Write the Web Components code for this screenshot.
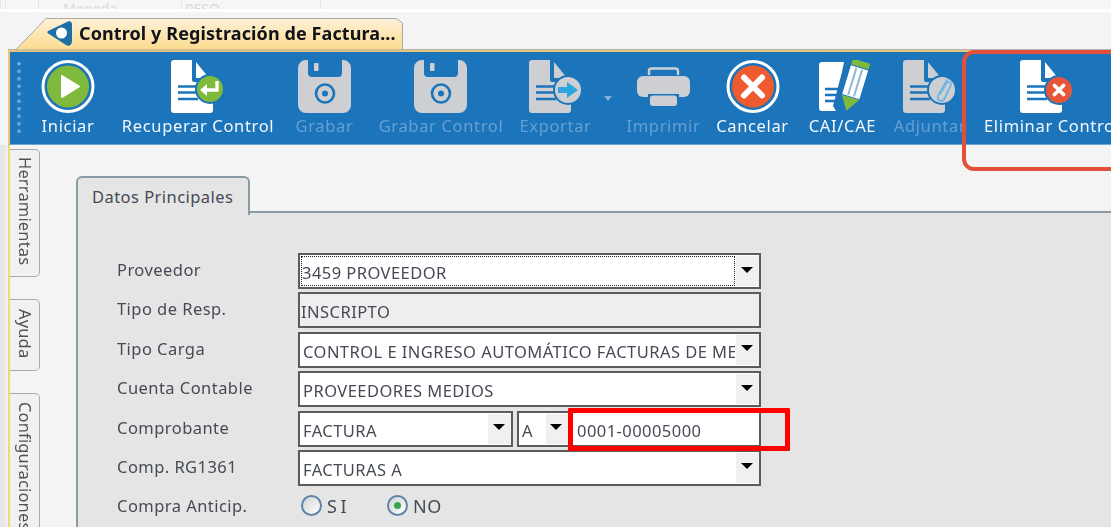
<!DOCTYPE html>
<html lang="es">
<head>
<meta charset="utf-8">
<title>Control y Registración de Facturas</title>
<style>
  html, body { margin: 0; height: 100%; overflow: hidden; background: #f4f4f4; }
  body { font-family: "Noto Sans", "Liberation Sans", sans-serif; }
</style>
</head>
<body>
<app-shell>
  <top-strip></top-strip>
  <doc-tab>Control y Registración de Factura...</doc-tab>
  <tool-bar>
    <tool-button icon="play" w="54" gap="0">Iniciar</tool-button>
    <tool-button icon="recover" w="152" gap="27">Recuperar Control</tool-button>
    <tool-button icon="save" w="57" gap="22" off>Grabar</tool-button>
    <tool-button icon="save" w="124" gap="26" off>Grabar Control</tool-button>
    <tool-button icon="export" w="73" gap="16" off menu>Exportar</tool-button>
    <tool-button icon="print" w="67" gap="38" off>Imprimir</tool-button>
    <tool-button icon="cancel" w="71" gap="20">Cancelar</tool-button>
    <tool-button icon="cai" w="69" gap="20">CAI/CAE</tool-button>
    <tool-button icon="attach" w="70" gap="18" off>Adjuntar</tool-button>
    <tool-button icon="delete" w="126" gap="19" start>Eliminar Control</tool-button>
  </tool-bar>
  <work-area>
    <side-tabs slot="side">
      <side-tab h="128" pad="7">Herramientas</side-tab>
      <side-tab h="72" pad="9">Ayuda</side-tab>
      <side-tab h="160" pad="8">Configuraciones</side-tab>
    </side-tabs>
    <form-panel title="Datos Principales">
      <form-row label="Proveedor"><combo-box focused>3459 PROVEEDOR</combo-box></form-row>
      <form-row label="Tipo de Resp."><combo-box readonly>INSCRIPTO</combo-box></form-row>
      <form-row label="Tipo Carga"><combo-box>CONTROL E INGRESO AUTOMÁTICO FACTURAS DE MEDIOS</combo-box></form-row>
      <form-row label="Cuenta Contable"><combo-box>PROVEEDORES MEDIOS</combo-box></form-row>
      <form-row label="Comprobante">
        <combo-box w="215">FACTURA</combo-box>
        <combo-box w="53" small>A</combo-box>
        <combo-box w="191" plain>0001-00005000</combo-box>
      </form-row>
      <form-row label="Comp. RG1361"><combo-box>FACTURAS A</combo-box></form-row>
      <form-row label="Compra Anticip.">
        <radio-opt>S I</radio-opt>
        <radio-opt checked>NO</radio-opt>
      </form-row>
    </form-panel>
  </work-area>
  <mark-box color="#e2503a" radius="12" thick="4" x="962" y="50" w="170" h="121"></mark-box>
  <mark-box color="#ff0000" radius="1" thick="5" x="568" y="408" w="222" h="43"></mark-box>
</app-shell>

<script>
const GRAY = "#cdcfd2";
const BLUE = "#1c75bb";

function docShape(fill, lines) {
  return `<path fill="${fill}" d="M3 0H21V20a2 2 0 0 0 2 2H42V50a3 3 0 0 1-3 3H3a3 3 0 0 1-3-3V3a3 3 0 0 1 3-3Z"/>
    <path fill="${fill}" d="M25 2L38 18H25Z"/>
    <path stroke="${lines}" stroke-width="2.4" d="M7 26.5H27M7 32.5H25M7 39H27"/>`;
}

const ICONS = {
  play: `<circle cx="27" cy="26.5" r="25" fill="none" stroke="#fff" stroke-width="3"/>
    <circle cx="27" cy="26.5" r="21" fill="#7fba3c"/>
    <path fill="#fff" stroke="#fff" stroke-width="2" stroke-linejoin="round" d="M21 16L38 26.5L21 37Z"/>`,
  recover: docShape("#fff", BLUE) + `<circle cx="39" cy="29" r="15" fill="${BLUE}"/>
    <circle cx="39" cy="29" r="13" fill="#7fba3c"/>
    <path fill="none" stroke="#fff" stroke-width="3.4" d="M46 21V30H33"/>
    <path fill="#fff" d="M36 24V36L29 30Z"/>`,
  save: `<path fill="${GRAY}" d="M8 0H10V13a4 4 0 0 0 4 4H40a4 4 0 0 0 4-4V0H45a8 8 0 0 1 8 8V45a8 8 0 0 1-8 8H8a8 8 0 0 1-8-8V8a8 8 0 0 1 8-8Z"/>
    <rect x="16" y="3" width="4.5" height="8" rx="1" fill="${GRAY}"/>
    <circle cx="27" cy="33.5" r="9" fill="none" stroke="${BLUE}" stroke-width="2.6"/>
    <circle cx="27" cy="33.5" r="3" fill="${BLUE}"/>`,
  export: docShape(GRAY, BLUE) + `<circle cx="39" cy="30" r="15" fill="${BLUE}"/>
    <circle cx="39" cy="30" r="13" fill="${GRAY}"/>
    <path fill="#2ba6e0" d="M29 27H38V22L49 30L38 38V33H29Z"/>`,
  print: `<path fill="none" stroke="${GRAY}" stroke-width="2.4" d="M12 15V11a2.500 2.500 0 0 1 2.500-2.500H38.500A2.500 2.500 0 0 1 41 11V15"/>
    <rect x="0" y="16" width="53" height="21" rx="6" fill="${GRAY}"/>
    <rect x="11" y="34" width="31" height="3" fill="${BLUE}"/>
    <rect x="13" y="35.500" width="27" height="10.500" rx="3" fill="${GRAY}"/>`,
  cancel: `<circle cx="27" cy="26.5" r="25" fill="none" stroke="#fff" stroke-width="3"/>
    <circle cx="27" cy="26.5" r="21" fill="#ee5b2f"/>
    <path stroke="#fff" stroke-width="6" stroke-linecap="round" d="M18 17.500L36 35.500M36 17.500L18 35.500"/>`,
  cai: `<g transform="translate(2 0)">
      <path fill="#fff" d="M4 2H26L24 12L15 46L18 51H4a3 3 0 0 1-3-3V5a3 3 0 0 1 3-3Z"/>
      <path stroke="${BLUE}" stroke-width="2.400" d="M7 29H22M7 35H20M7 41H19"/>
      <g transform="rotate(17 36 26)">
        <path fill="#7fba3c" d="M27 0H45V6H27Z"/>
        <path fill="#fff" d="M27 7H45V37H27Z"/>
        <path stroke="#8fb8da" stroke-width="2" d="M33 8V36M39 8V36"/>
        <path fill="#7fba3c" d="M27 38H45L36 52Z"/>
      </g>
    </g>`,
  attach: docShape(GRAY, BLUE) + `<circle cx="39" cy="30" r="15" fill="${BLUE}"/>
    <circle cx="39" cy="30" r="13" fill="${GRAY}"/>
    <path fill="none" stroke="#6fb7e2" stroke-width="1.800" stroke-linecap="round" d="M44 20L35 36a3.500 3.500 0 0 0 6 3.500L48 25a2.500 2.500 0 0 0-4-2.500L37 34"/>`,
  delete: docShape("#fff", BLUE) + `<circle cx="39" cy="30" r="15" fill="${BLUE}"/>
    <circle cx="39" cy="30" r="13" fill="#e8563a"/>
    <path stroke="#fff" stroke-width="3.600" stroke-linecap="round" d="M34.500 25.500L43.500 34.500M43.500 25.500L34.500 34.500"/>`
};

class AppShell extends HTMLElement {
  constructor() {
    super();
    this.attachShadow({ mode: "open" });
    this.shadowRoot.innerHTML = `
      <style>
        /* the reference is an upscaled capture, a touch soft everywhere */
        :host { display: flex; flex-direction: column; position: relative; height: 527px; overflow: hidden; filter: blur(0.4px); }
      </style>
      <slot></slot>`;
  }
}

class TopStrip extends HTMLElement {
  constructor() {
    super();
    this.attachShadow({ mode: "open" });
    this.shadowRoot.innerHTML = `
      <style>
        :host { display: block; height: 9px; background: #f6f6f6; border-bottom: 3px solid #fff; overflow: hidden; color: #dadada; font-size: 14px; }
        .row { display: grid; grid-template-columns: 5px 33px 143px 139px 1fr; height: 9px; line-height: 14px; }
        .row > div { border-left: 1px solid #e6e6e6; white-space: nowrap; overflow: hidden; padding-top: 2px; }
        .m { padding-left: 24px; }
        .p { padding-left: 3px; }
      </style>
      <div class="row"><div></div><div></div><div class="m">Moneda</div><div class="p">PESO</div><div></div></div>`;
  }
}

class DocTab extends HTMLElement {
  constructor() {
    super();
    this.attachShadow({ mode: "open" });
    this.shadowRoot.innerHTML = `
      <style>
        :host { display: block; height: 39px; padding-left: 15px; margin-bottom: -1px; position: relative; z-index: 1; }
        .tab { position: relative; width: 389px; height: 39px; display: flex; align-items: center; padding-left: 32px; box-sizing: border-box; }
        svg.bg { position: absolute; left: 0; top: 0; }
        svg.logo { position: relative; flex: none; margin-right: 6px; margin-top: 3px; }
        .t { position: relative; font-weight: 700; font-size: 18px; letter-spacing: 0.100px; color: #10131a; white-space: nowrap; margin-top: 3px; }
      </style>
      <div class="tab">
        <svg class="bg" width="389" height="39" viewBox="0 0 389 39">
          <defs><linearGradient id="g" x1="0" y1="0" x2="0" y2="1">
            <stop offset="0" stop-color="#fdf1d8"/><stop offset="1" stop-color="#fbdb8d"/>
          </linearGradient></defs>
          <path d="M0.500 38L31 6.500H381L387.500 11V38Z" fill="url(#g)" stroke="#a9a9a9"/>
        </svg>
        <svg class="logo" width="26" height="27" viewBox="0 0 26 27">
          <path fill="#1e6fa8" d="M1 11L21 1.500C23.500 0.500 25 2 25 4.500L25 21C25 25 22 27 19 25L2 14C0 13 0 12 1 11Z"/>
          <circle cx="14.500" cy="13" r="5.500" fill="#fff"/>
        </svg>
        <span class="t"><slot></slot></span>
      </div>`;
  }
}

class ToolBar extends HTMLElement {
  constructor() {
    super();
    this.attachShadow({ mode: "open" });
    this.shadowRoot.innerHTML = `
      <style>
        :host { display: block; flex: none; height: 95px; margin-left: 8px; box-sizing: border-box; background: ${BLUE}; border-top: 2px solid #e9c878; border-left: 2px solid #e9c878; border-bottom: 1px solid #6ea6d6; box-shadow: 0 -1px #b4b4b4; overflow: hidden; white-space: nowrap; }
        .row { display: flex; padding: 8px 0 0 7px; }
        .grip { flex: none; width: 4px; height: 74px; margin-right: 20px; background: radial-gradient(circle, #6ba6d8 1.7px, transparent 2px) 0 0 / 4px 7.500px repeat-y; }
      </style>
      <div class="row"><div class="grip"></div><slot></slot></div>`;
  }
}

class ToolButton extends HTMLElement {
  constructor() {
    super();
    this.attachShadow({ mode: "open" });
    const off = this.hasAttribute("off");
    const menu = this.hasAttribute("menu");
    const start = this.hasAttribute("start");
    this.shadowRoot.innerHTML = `
      <style>
        :host { display: flex; flex: none; flex-direction: column; align-items: center; position: relative; width: ${this.getAttribute("w")}px; margin-left: ${this.getAttribute("gap")}px; color: ${off ? "#669fd3" : "#f4f8fc"}; font-size: 16.500px; letter-spacing: 0.650px; }
        svg { display: block; }
        .l { line-height: 20px; margin-top: 2px; white-space: nowrap; ${start ? "align-self: flex-start;" : ""} }
        .arrow { position: absolute; right: -20px; top: 36px; width: 0; height: 0; border: 4px solid transparent; border-top: 5px solid #7fb2de; }
      </style>
      <svg width="54" height="54" viewBox="0 0 54 54">${ICONS[this.getAttribute("icon")]}</svg>
      <span class="l"><slot></slot></span>
      ${menu ? '<i class="arrow"></i>' : ""}`;
  }
}

class WorkArea extends HTMLElement {
  constructor() {
    super();
    this.attachShadow({ mode: "open" });
    this.shadowRoot.innerHTML = `
      <style>
        :host { display: flex; flex: 1; min-height: 0; }
        .edge { flex: none; width: 8px; background: linear-gradient(90deg, #e6e6e6 0 5px, #f0f0f0 5px); }
        .stripe { flex: none; width: 2px; background: #f6d67a; }
        ::slotted(form-panel) { flex: 1; }
      </style>
      <div class="edge"></div><div class="stripe"></div>
      <slot name="side"></slot><slot></slot>`;
  }
}

class SideTabs extends HTMLElement {
  constructor() {
    super();
    this.attachShadow({ mode: "open" });
    this.shadowRoot.innerHTML = `
      <style>
        :host { display: flex; flex: none; flex-direction: column; gap: 22px; width: 30px; padding-top: 4px; margin-right: 36px; }
      </style>
      <slot></slot>`;
  }
}

class SideTab extends HTMLElement {
  constructor() {
    super();
    this.attachShadow({ mode: "open" });
    this.shadowRoot.innerHTML = `
      <style>
        :host { display: flex; flex: none; box-sizing: border-box; justify-content: center; padding: ${this.getAttribute("pad")}px 0 0 2px; width: 30px; height: ${this.getAttribute("h")}px; background: #f1f1f1; border: 1px solid #a9acae; border-left: 0; border-radius: 0 5px 5px 0; color: #4f5257; font-size: 16.500px; letter-spacing: 0.150px; }
        span { writing-mode: vertical-rl; white-space: nowrap; }
      </style>
      <span><slot></slot></span>`;
  }
}

class FormPanel extends HTMLElement {
  constructor() {
    super();
    this.attachShadow({ mode: "open" });
    this.shadowRoot.innerHTML = `
      <style>
        :host { display: flex; flex-direction: column; padding-top: 31px; min-width: 0; color: #454a55; font-size: 16.500px; letter-spacing: 0.450px; }
        .head { display: flex; flex: none; height: 37px; }
        .tab { box-sizing: border-box; width: 174px; height: 39px; padding: 8px 0 0 14px; background: #e5e5e5; border: 2px solid #8b9ba3; border-bottom: 0; border-radius: 6px 6px 0 0; position: relative; z-index: 1; line-height: 22px; }
        .fill { flex: 1; border-bottom: 2px solid #8b9ba3; }
        .body { flex: 1; display: flex; flex-direction: column; gap: 3.400px; padding: 40px 0 0 39px; background: #e5e5e5; border-left: 2px solid #8b9ba3; }
      </style>
      <div class="head"><div class="tab">${this.getAttribute("title")}</div><div class="fill"></div></div>
      <div class="body"><slot></slot></div>`;
    this.removeAttribute("title");
  }
}

class FormRow extends HTMLElement {
  constructor() {
    super();
    this.attachShadow({ mode: "open" });
    this.shadowRoot.innerHTML = `
      <style>
        :host { display: flex; flex: none; height: 36px; align-items: center; }
        label { flex: none; width: 181px; margin-top: -3px; white-space: nowrap; }
        .ctl { display: flex; width: 463px; height: 36px; align-items: center; }
      </style>
      <label>${this.getAttribute("label")}</label>
      <div class="ctl"><slot></slot></div>`;
  }
}

class ComboBox extends HTMLElement {
  constructor() {
    super();
    this.attachShadow({ mode: "open" });
    const w = this.getAttribute("w");
    const readonly = this.hasAttribute("readonly");
    const plain = this.hasAttribute("plain");
    const focused = this.hasAttribute("focused");
    const small = this.hasAttribute("small");
    const pad = focused ? 1 : readonly ? 0 : plain ? 4 : 2;
    this.shadowRoot.innerHTML = `
      <style>
        :host { display: flex; flex: none; box-sizing: border-box; width: ${w ? w + "px" : "100%"}; height: 36px; background: ${readonly ? "#eeeeee" : "#fff"}; border: 2px solid #5b5b5b; color: #454a55; margin-right: ${w && !plain && !small ? 4 : 0}px; }
        .v { flex: 1; min-width: 0; margin: 1px; padding-left: ${pad}px; overflow: hidden; white-space: nowrap; line-height: 33px; height: 30px; box-sizing: border-box; ${focused ? "outline: 1px dotted #222; outline-offset: -1px;" : ""} }
        .a { flex: none; display: flex; align-items: center; justify-content: center; width: ${small ? 22 : 23}px; background: #f0f0f0; margin: 1px 0; padding: 0 2px 3px 0; box-sizing: border-box; }
        .a i { width: 0; height: 0; border: 6px solid transparent; border-top: 6px solid #000; border-bottom: 0; }
      </style>
      <div class="v"><slot></slot></div>
      ${readonly || plain ? "" : '<div class="a"><i></i></div>'}`;
  }
}

class RadioOpt extends HTMLElement {
  constructor() {
    super();
    this.attachShadow({ mode: "open" });
    this.shadowRoot.innerHTML = `
      <style>
        :host { display: flex; flex: none; align-items: center; gap: 5px; width: 83px; margin-left: 3px; margin-top: -3px; font-size: 18px; word-spacing: -2px; }
        .c { flex: none; box-sizing: border-box; display: flex; align-items: center; justify-content: center; width: 21px; height: 21px; border-radius: 50%; border: 2px solid #5c84a8; background: linear-gradient(135deg, #d4d4d4, #fff); }
        .c i { width: 7px; height: 7px; border-radius: 50%; background: #3aa655; }
      </style>
      <span class="c">${this.hasAttribute("checked") ? "<i></i>" : ""}</span><span><slot></slot></span>`;
  }
}

class MarkBox extends HTMLElement {
  constructor() {
    super();
    this.attachShadow({ mode: "open" });
    const a = (n) => this.getAttribute(n);
    this.shadowRoot.innerHTML = `
      <style>
        :host { display: block; position: absolute; z-index: 5; box-sizing: border-box; left: ${a("x")}px; top: ${a("y")}px; width: ${a("w")}px; height: ${a("h")}px; border: ${a("thick")}px solid ${a("color")}; border-radius: ${a("radius")}px; }
      </style>`;
  }
}

customElements.define("app-shell", AppShell);
customElements.define("top-strip", TopStrip);
customElements.define("doc-tab", DocTab);
customElements.define("tool-bar", ToolBar);
customElements.define("tool-button", ToolButton);
customElements.define("work-area", WorkArea);
customElements.define("side-tabs", SideTabs);
customElements.define("side-tab", SideTab);
customElements.define("form-panel", FormPanel);
customElements.define("form-row", FormRow);
customElements.define("combo-box", ComboBox);
customElements.define("radio-opt", RadioOpt);
customElements.define("mark-box", MarkBox);
</script>
</body>
</html>
